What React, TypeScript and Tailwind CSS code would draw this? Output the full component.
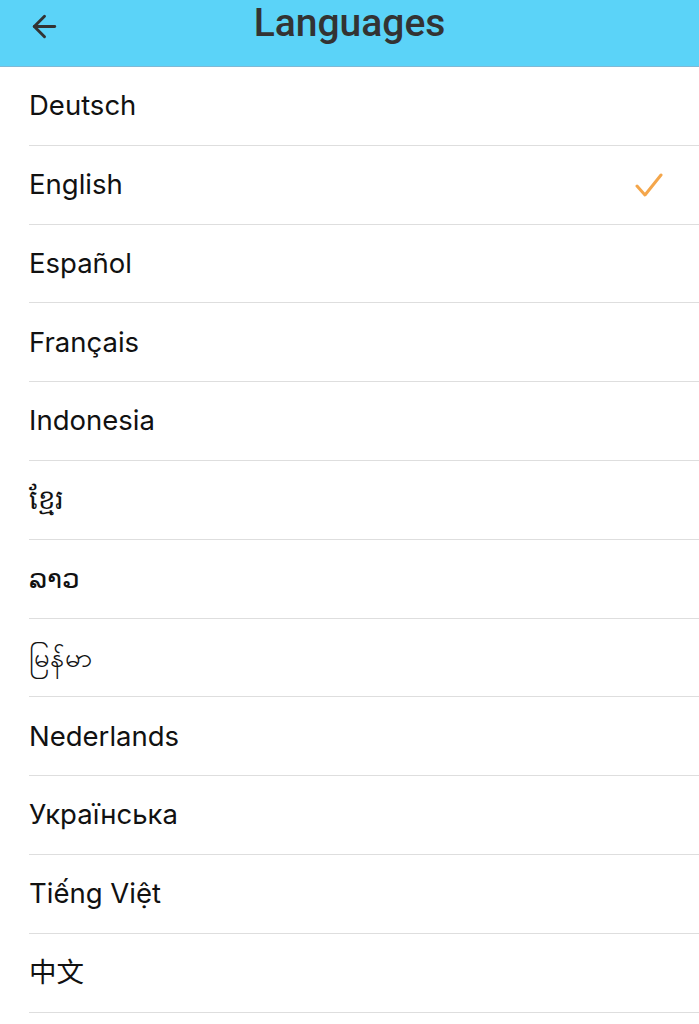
import { ArrowLeft } from 'lucide-react';

const languages = [
  'Deutsch',
  'English',
  'Español',
  'Français',
  'Indonesia',
  'ខ្មែរ',
  'ລາວ',
  'မြန်မာ',
  'Nederlands',
  'Українська',
  'Tiếng Việt',
  '中文',
];

export default function App() {
  const selected = 'English';

  return (
    <div className="min-h-screen bg-white" style={{ fontFamily: 'Inter, "Noto Sans", "Noto Sans CJK SC", sans-serif' }}>
      {/* Header */}
      <div className="relative flex h-[67px] items-center justify-center bg-[#5bd3f8] border-b border-[#7fb9d6]">
        <button className="absolute left-[27px] top-[9px] text-[#333]">
          <ArrowLeft size={35} strokeWidth={2} />
        </button>
        <h1 className="-mt-[19px] text-[39px] font-medium text-[#333]" style={{ fontFamily: 'Roboto, sans-serif' }}>
          Languages
        </h1>
      </div>

      {/* List */}
      <div className="pl-[29px]">
        {languages.map((lang) => (
          <div key={lang} className="flex h-[78.8px] items-center justify-between border-b border-[#dedede] pr-[36px]">
            <span className="text-[27.5px] text-[#111]">{lang}</span>
            {lang === selected && (
              <svg width="28" height="26" viewBox="0 0 28 26" fill="none" className="text-[#f4a64b]">
                <path d="M2 14 L10 23 L26 3" stroke="currentColor" strokeWidth="3" strokeLinecap="round" strokeLinejoin="round" />
              </svg>
            )}
          </div>
        ))}
      </div>
    </div>
  );
}
